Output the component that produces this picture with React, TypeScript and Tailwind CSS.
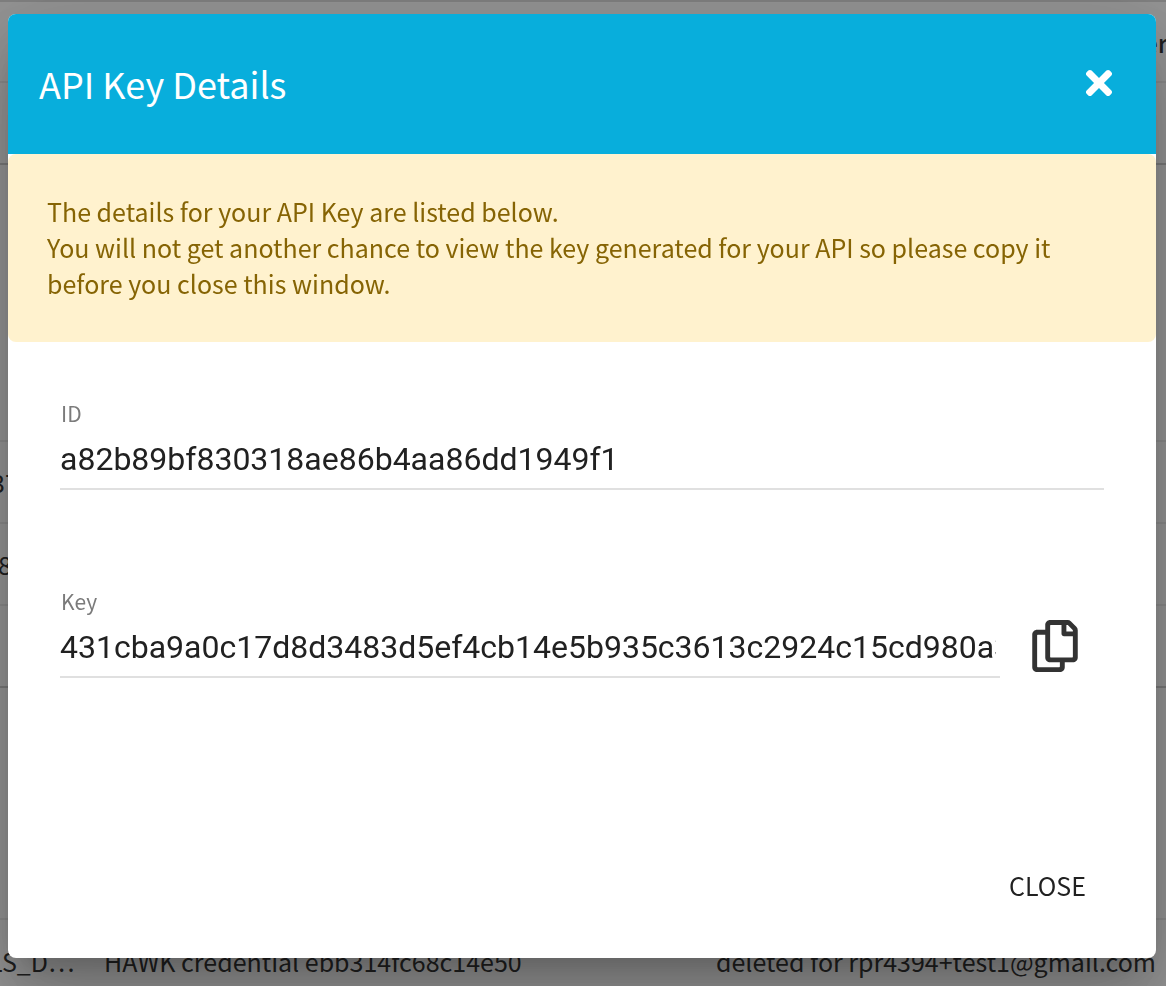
import { useState } from "react";
import { FaTimes, FaRegCopy } from "react-icons/fa";

type Row = {
  size: string;
  indent?: string;
  name?: string;
  detail?: string;
  note?: string;
};

const rows: Row[] = [
  { size: "h-[82px] border-black/8" },
  { size: "h-[277px] border-black/20" },
  { size: "h-[82px] border-black/8", indent: "pl-[7px]", name: "37" },
  { size: "h-[82px] border-black/8", indent: "pl-[14px]", name: "8" },
  { size: "h-[82px] border-black/8" },
  { size: "h-[232px] border-black/20" },
  {
    size: "h-[82px] border-black/8",
    indent: "pl-[5px]",
    name: "LS_D…",
    detail: "HAWK credential ebb314fc68c14e50",
    note: "deleted for rpr4394+test1@gmail.com",
  },
];

function ActivityTable() {
  return (
    <table className="-ml-4 w-[calc(100%+18px)] table-fixed border-collapse text-[25px] leading-9">
      <thead>
        <tr className="h-[81px] border-t-2 border-black/15">
          <th className="w-[120px]"></th>
          <th className="w-[612px]"></th>
          <th className="text-right font-medium">er</th>
        </tr>
      </thead>
      <tbody>
        {rows.map((row, i) => (
          <tr key={i} className={`border-t-2 whitespace-nowrap ${row.size}`}>
            <td className={row.indent}>{row.name}</td>
            <td>{row.detail}</td>
            <td>{row.note}</td>
          </tr>
        ))}
      </tbody>
    </table>
  );
}

function Field({ id, label, value }: { id: string; label: string; value: string }) {
  return (
    <div className="min-w-0 flex-1">
      <label htmlFor={id} className="block pl-px text-[21px] leading-7 text-[#7b7b7b]">
        {label}
      </label>
      <input
        id={id}
        readOnly
        value={value}
        className="h-[63px] w-full border-b-2 border-[#e0e0e0] bg-transparent pt-[3px] pr-1 font-[Roboto] text-[32px] text-[#212121] outline-none"
      />
    </div>
  );
}

export default function App() {
  const [open, setOpen] = useState(true);
  const apiKey =
    "431cba9a0c17d8d3483d5ef4cb14e5b935c3613c2924c15cd980a3b7";

  return (
    <div className="relative h-screen overflow-hidden bg-white font-['Noto_Sans_CJK_SC',sans-serif] text-[#212121]">
      <ActivityTable />
      {open && (
        <div className="fixed inset-0 bg-[#212121]/48 pt-3.5 pr-2.5 pb-7 pl-2">
          <div
            role="dialog"
            aria-labelledby="dialog-title"
            className="flex h-full flex-col overflow-hidden rounded-lg bg-white shadow-[0_22px_30px_-14px_rgba(0,0,0,0.2),0_48px_76px_6px_rgba(0,0,0,0.14),0_18px_92px_16px_rgba(0,0,0,0.12)]"
          >
            <header className="flex h-[140px] shrink-0 items-center justify-between bg-[#08aedc] pr-[38px] pb-0.5 pl-[31px] text-white">
              <h2 id="dialog-title" className="text-[36px]">
                API Key Details
              </h2>
              <button type="button" aria-label="Close dialog" onClick={() => setOpen(false)}>
                <FaTimes size={38} />
              </button>
            </header>
            <div className="rounded-lg bg-[#fff2ce] px-[39px] pt-[39px] pb-[41px] text-[25px] leading-9 text-[#866404]">
              <p>The details for your API Key are listed below.</p>
              <p>
                You will not get another chance to view the key generated for your API so please copy it
                before you close this window.
              </p>
            </div>
            <div className="flex flex-col gap-[97px] px-[52px] pt-[57px]">
              <Field id="api-id" label="ID" value="a82b89bf830318ae86b4aa86dd1949f1" />
              <div className="flex items-end gap-8">
                <Field id="api-key" label="Key" value={apiKey} />
                <button
                  type="button"
                  aria-label="Copy key"
                  className="mr-[26px] mb-1.5 text-[#333]"
                  onClick={() => navigator.clipboard.writeText(apiKey)}
                >
                  <FaRegCopy className="h-[52px] w-[46px]" />
                </button>
              </div>
            </div>
            <footer className="mt-auto flex justify-end px-[70px] pb-[55px]">
              <button type="button" className="text-[25px] leading-9" onClick={() => setOpen(false)}>
                CLOSE
              </button>
            </footer>
          </div>
        </div>
      )}
    </div>
  );
}
